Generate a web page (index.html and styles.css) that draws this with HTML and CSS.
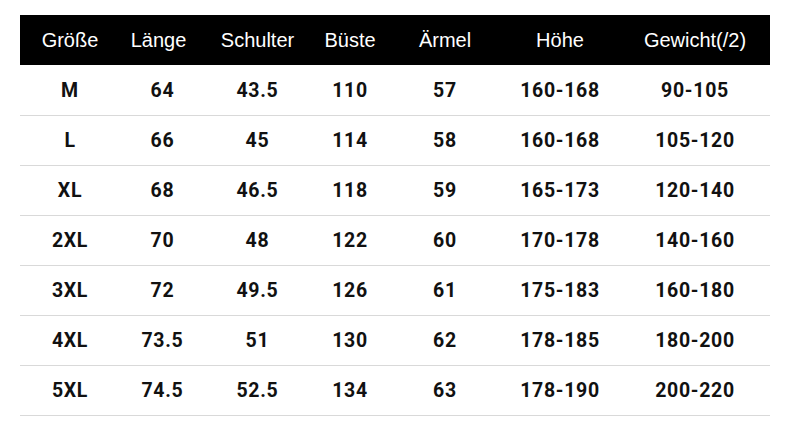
FILE: index.html
```html
<!DOCTYPE html>
<html>
<head>
<meta charset="utf-8">
<link rel="stylesheet" href="styles.css">
</head>
<body>
<table class="size-table">
  <colgroup>
    <col class="c1"><col class="c2"><col class="c3"><col class="c4"><col class="c5"><col class="c6"><col class="c7">
  </colgroup>
  <thead>
    <tr><th>Größe</th><th class="h-len">Länge</th><th>Schulter</th><th>Büste</th><th>Ärmel</th><th>Höhe</th><th>Gewicht(/2)</th></tr>
  </thead>
  <tbody>
    <tr><td>M</td><td>64</td><td>43.5</td><td>110</td><td>57</td><td>160-168</td><td>90-105</td></tr>
    <tr><td>L</td><td>66</td><td>45</td><td>114</td><td>58</td><td>160-168</td><td>105-120</td></tr>
    <tr><td>XL</td><td>68</td><td>46.5</td><td>118</td><td>59</td><td>165-173</td><td>120-140</td></tr>
    <tr><td>2XL</td><td>70</td><td>48</td><td>122</td><td>60</td><td>170-178</td><td>140-160</td></tr>
    <tr><td>3XL</td><td>72</td><td>49.5</td><td>126</td><td>61</td><td>175-183</td><td>160-180</td></tr>
    <tr><td>4XL</td><td>73.5</td><td>51</td><td>130</td><td>62</td><td>178-185</td><td>180-200</td></tr>
    <tr><td>5XL</td><td>74.5</td><td>52.5</td><td>134</td><td>63</td><td>178-190</td><td>200-220</td></tr>
  </tbody>
</table>
</body>
</html>
```
FILE: styles.css
```css
html, body {
  margin: 0;
  padding: 0;
  background: #ffffff;
}
body {
  padding: 15px 20px 0 20px;
}
.size-table {
  width: 750px;
  border-collapse: collapse;
  table-layout: fixed;
}
.c1 { width: 100px; }
.c2 { width: 85px; }
.c3 { width: 105px; }
.c4 { width: 80px; }
.c5 { width: 110px; }
.c6 { width: 120px; }
.c7 { width: 150px; }
.size-table th {
  background: #000000;
  color: #ffffff;
  height: 50px;
  padding: 0;
  font-family: "Liberation Sans", Arial, sans-serif;
  font-weight: normal;
  font-size: 20px;
  text-align: center;
  vertical-align: middle;
}
.size-table th.h-len {
  padding-right: 8px;
}
.size-table td {
  height: 49px;
  padding: 0;
  border-bottom: 1px solid #d9d9d9;
  font-family: Roboto, "DejaVu Sans", sans-serif;
  font-weight: 700;
  font-size: 19.5px;
  letter-spacing: 0.7px;
  color: #111111;
  text-align: center;
  vertical-align: middle;
}
.size-table tbody tr:first-child td {
  height: 50px;
}
```
